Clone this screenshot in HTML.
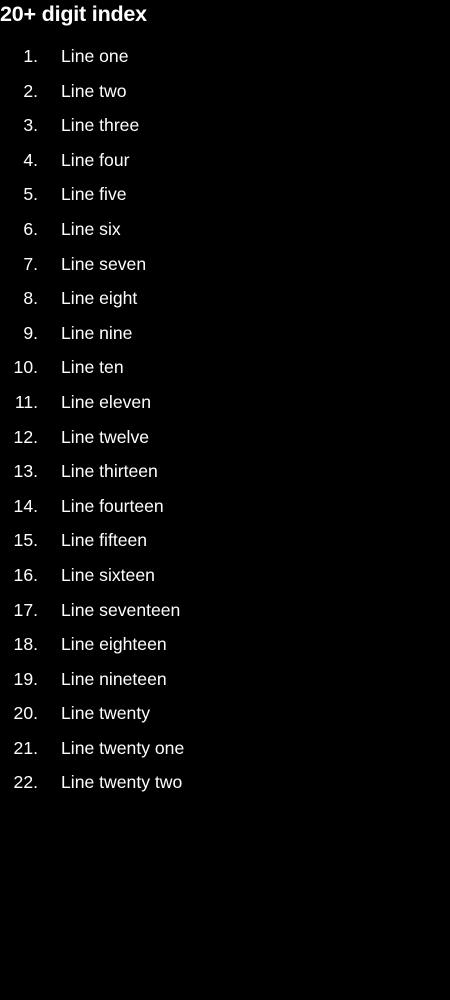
<!DOCTYPE html>
<html><head><style>
html,body{margin:0;padding:0;background:#000;width:450px;height:1000px;overflow:hidden}
body{font-family:"Liberation Sans",sans-serif;color:#fff}
h1{margin:0;position:absolute;left:0;top:1px;font-size:21.5px;font-weight:bold;line-height:26px;letter-spacing:-0.2px}
ol{list-style:none;margin:0;padding:0;position:absolute;top:39px;left:0}
li{height:34.6px;line-height:34.6px;font-size:17.6px;position:relative;white-space:nowrap}
li span{position:absolute;left:0;width:38px;text-align:right}
li b{font-weight:normal;position:absolute;left:61px}
</style></head><body>
<h1>20+ digit index</h1>
<ol>
<li><span>1.</span><b>Line one</b></li>
<li><span>2.</span><b>Line two</b></li>
<li><span>3.</span><b>Line three</b></li>
<li><span>4.</span><b>Line four</b></li>
<li><span>5.</span><b>Line five</b></li>
<li><span>6.</span><b>Line six</b></li>
<li><span>7.</span><b>Line seven</b></li>
<li><span>8.</span><b>Line eight</b></li>
<li><span>9.</span><b>Line nine</b></li>
<li><span>10.</span><b>Line ten</b></li>
<li><span>11.</span><b>Line eleven</b></li>
<li><span>12.</span><b>Line twelve</b></li>
<li><span>13.</span><b>Line thirteen</b></li>
<li><span>14.</span><b>Line fourteen</b></li>
<li><span>15.</span><b>Line fifteen</b></li>
<li><span>16.</span><b>Line sixteen</b></li>
<li><span>17.</span><b>Line seventeen</b></li>
<li><span>18.</span><b>Line eighteen</b></li>
<li><span>19.</span><b>Line nineteen</b></li>
<li><span>20.</span><b>Line twenty</b></li>
<li><span>21.</span><b>Line twenty one</b></li>
<li><span>22.</span><b>Line twenty two</b></li>
</ol>
</body></html>
